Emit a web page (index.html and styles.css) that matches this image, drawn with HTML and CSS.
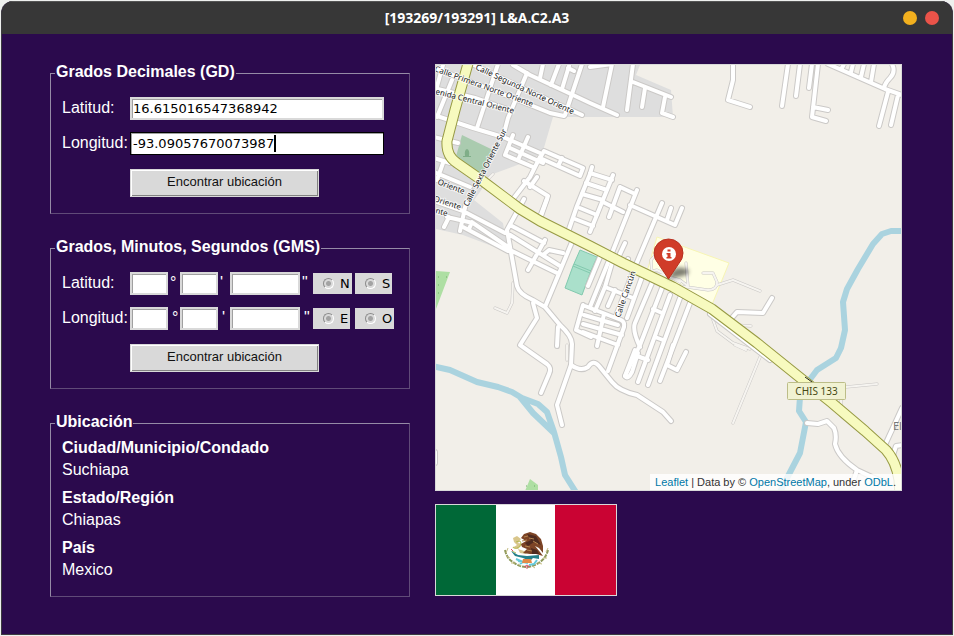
FILE: index.html
```html
<!DOCTYPE html>
<html lang="es">
<head>
<meta charset="utf-8">
<meta name="viewport" content="width=device-width, initial-scale=1">
<title>[193269/193291] L&amp;A.C2.A3</title>
<link rel="stylesheet" href="styles.css">
</head>
<body>
<div class="window">
  <header class="titlebar">
    <h1 class="title">[193269/193291] L&amp;A.C2.A3</h1>
    <div class="window-controls">
      <button class="control minimize" type="button" aria-label="Minimizar"></button>
      <button class="control close" type="button" aria-label="Cerrar"></button>
    </div>
  </header>
  <main class="content">
    <div class="column">
      <form>
        <fieldset class="panel">
          <legend>Grados Decimales (GD)</legend>
          <div class="row">
            <label class="caption" for="gd-lat">Latitud:</label>
            <div class="field"><input id="gd-lat" class="entry" type="text" value="16.615016547368942"></div>
          </div>
          <div class="row">
            <label class="caption" for="gd-lon">Longitud:</label>
            <div class="field"><input id="gd-lon" class="entry active" type="text" value="-93.09057670073987"><span class="caret"></span></div>
          </div>
          <button class="action" type="button">Encontrar ubicación</button>
        </fieldset>
      </form>
      <form>
        <fieldset class="panel">
          <legend>Grados, Minutos, Segundos (GMS)</legend>
          <div class="row">
            <label class="caption" for="lat-g">Latitud:</label>
            <div class="dms">
              <input id="lat-g" class="entry" type="text"><span class="unit">°</span>
              <input class="entry" type="text" aria-label="Minutos de latitud"><span class="unit">'</span>
              <input class="entry" type="text" aria-label="Segundos de latitud"><span class="unit">"</span>
              <label class="choice"><input type="radio" name="lat">N</label>
              <label class="choice"><input type="radio" name="lat">S</label>
            </div>
          </div>
          <div class="row">
            <label class="caption" for="lon-g">Longitud:</label>
            <div class="dms">
              <input id="lon-g" class="entry" type="text"><span class="unit shifted">°</span>
              <input class="entry" type="text" aria-label="Minutos de longitud"><span class="unit shifted">'</span>
              <input class="entry" type="text" aria-label="Segundos de longitud"><span class="unit shifted">"</span>
              <label class="choice"><input type="radio" name="lon">E</label>
              <label class="choice"><input type="radio" name="lon">O</label>
            </div>
          </div>
          <button class="action" type="button">Encontrar ubicación</button>
        </fieldset>
      </form>
      <fieldset class="panel place">
        <legend>Ubicación</legend>
        <dl>
          <div><dt>Ciudad/Municipio/Condado</dt><dd>Suchiapa</dd></div>
          <div><dt>Estado/Región</dt><dd>Chiapas</dd></div>
          <div><dt>País</dt><dd>Mexico</dd></div>
        </dl>
      </fieldset>
    </div>
    <div class="column visuals">
      <div class="map">
        <svg class="map-drawing" viewBox="436 65 465 425" preserveAspectRatio="xMidYMid slice" role="img" aria-label="Mapa de Suchiapa">
          <defs>
            <g id="streets">
              <path d="M513 65L530 75L573 95L590 103L617 115M434 68L477 84L513 98L550 113L564 116M472 64L520 87L582 115M434 88L475 98L510 110M434 115L473 128L503 137L540 153"/>
              <path d="M498 64L477 128M527 73L508 118L503 137M452 80L437 117M443 65L436 90M543 64L540 78M559 64L551 85M569 66L562 89M582 64L565 115M574 71L568 68M590 67L612 64L603 107M633 64L627 110M633 82L671 97M645 88L642 107M665 97L662 113L673 117"/>
              <path d="M434 137L458 143M434 158L450 163M443 163L437 180M434 172L470 187M513 135L505 155L533 167M528 137L518 160M510 148L543 163M544 151L583 168L580 176L540 158ZM562 158L559 164M540 157L530 177L510 203M537 177L530 187M524 181L548 196L540 219M590 174L577 206L567 235"/>
              <path d="M592 167L590 174M590 173L612 180M586 183L607 190M582 194L603 200M613 175L590 232M580 208L597 215M575 219L593 226M620 187L609 217M620 187L633 193M637 190L612 253L590 307M662 203L635 267L616 316M603 202L623 212M630 205L675 225L682 208M671 208L667 220"/>
              <path d="M547 199L540 217M524 199L507 230L512 258L517 286Q519 294 533 300L545 307L560 325Q572 336 572 344L571 365L557 405L562 425M572 242L555 283L545 307M510 225L544 243M545 240L528 270M507 233L560 266M510 250L557 273M543 255L549 250L563 253M434 201L463 211L505 233M447 217L473 223L508 247M463 227L508 251M449 217L444 227M466 203L460 231M472 222L469 229"/>
              <path d="M533 303L537 318L520 345L547 364Q552 368 549 374L541 393M558 327L557 346M571 365Q581 372 588 367Q593 359 599 366L612 382Q619 391 637 395L663 412L671 421"/>
              <path d="M600 257L588 286M612 263L605 287L595 311M625 243L618 258M628 259L626 264M605 287L633 298M615 290L608 306M642 277L627 318M652 283L635 323Q632 330 640 347M662 288L640 345L625 376M653 309L662 313M670 295L638 382M680 298L648 385M690 303L660 381M655 337L663 340"/>
              <path d="M585 306L621 320Q625 322 624 327L608 371M584 315L618 325M583 324L622 335M583 332L618 345M604 314L597 346M583 305L576 330L591 337M635 350L625 376Q628 380 632 372L638 353M637 356L648 360M673 345L667 365L677 370L686 352"/>
              <path d="M788 64L782 106M800 64L796 96M812 64L809 88M818 64L812 117L826 121M813 107L828 110M828 64L885 89L902 95M844 64L842 68M853 64L851 72M864 64L861 77M874 64L871 82M892 64Q896 72 890 78Q885 83 884 88M888 92L879 126M898 95L891 125M733 64L733 80L728 100L750 107"/>
              <path d="M730 320L737 312L763 313L772 298M710 314L770 360M807 423L818 424L827 421L834 428Q837 435 835 444Q838 457 857 470L872 477L885 482M857 470L852 485M902 408L885 445M903 445L896 446L893 455"/>
              <path d="M435 452V463"/>
            </g>
            <g id="tracks">
              <path d="M513 283L512 303L507 313L495 308M717 285L733 280L760 291M703 273L713 273L717 282Q717 290 708 290L673 285M650 272L680 280L688 286L686 263M652 275L651 260L660 250M648 272L657 270L680 282M713 320L717 331L733 343L750 349M736 325L751 326M760 357L733 423M846 387L877 384M844 390L841 400L841 416L865 436M567 345L567 360M493 174L480 187M735 345L746 350"/>
            </g>
            <path id="highway" d="M469 60L455 110L447 141Q446 156 457 163L480 179L520 209L540 221L590 246L623 263L673 287L712 309L757 343L798 376L832 403L865 431L886 450Q896 461 899 480L900 496"/>
            <filter id="soft" x="-40%" y="-40%" width="180%" height="180%"><feGaussianBlur stdDeviation="2"/></filter>
          </defs>
          <rect class="land" x="436" y="65" width="465" height="425"/>
          <path class="urban" d="M436 65H640L636 75L671 90L673 117H553L543 151L533 159L493 174L474 200L503 223L508 252L463 235L436 229Z"/>
          <path class="park" d="M462 135L493 150L482 175L455 160Z"/>
          <path class="tree" d="M467 149Q470 150 469 156H471V157H463V156H465Q464 150 467 149Z"/>
          <path class="meadow" d="M436 271L450 272L436 309ZM525 491L530 479L538 485V491Z"/>
          <path class="dots" d="M438 277h1M446 277h1M438 285h1M438 293h1M526 486h1M534 486h1"/>
          <path class="school" d="M657 237L729 263L711 307L646 275Z"/>
          <path class="pitch" d="M580 250L597 257L590 273L582 295L565 288L573 266Z"/>
          <path class="pitch-line" d="M573 266L590 273M574 264L591 271"/>
          <path class="river" d="M432 366L450 370L477 382L498 387L512 392L522 398L538 404L547 412L554 432L561 457L565 475L577 494M520 397L533 413L555 434M904 231L891 231L882 234L873 244L858 269L847 289L843 302L845 330L841 348L836 358L817 370L808 382L800 397L799 411L806 422L800 453L786 480L779 494"/>
          <use class="track-case" href="#tracks"/><use class="track" href="#tracks"/>
          <use class="street-case" href="#streets"/><use class="street" href="#streets"/>
          <use class="highway-case" href="#highway"/><use class="highway" href="#highway"/>
          <path class="bridge" d="M805 377L812 382"/>
          <g class="street-name">
            <text transform="translate(475 69) rotate(25)">Calle Segunda Norte Oriente</text>
            <text transform="translate(434 71) rotate(20)">Calle Primera Norte Oriente</text>
            <text transform="translate(435 94) rotate(14)">enida Central Oriente</text>
            <text transform="translate(468 207) rotate(-63)">Calle Sexta Oriente Sur</text>
            <text transform="translate(437 184) rotate(21)">Oriente</text>
            <text transform="translate(433 201) rotate(18)">Oriente</text>
            <text transform="translate(435 213) rotate(15)">nte</text>
            <text transform="translate(620 318) rotate(-71)">Calle Cancún</text>
          </g>
          <text class="place-name" x="893" y="430">El</text>
          <rect class="shield" x="787.500" y="382.500" width="58" height="17" rx="1"/>
          <text class="shield-text" x="816.500" y="395">CHIS 133</text>
          <path class="shadow" d="M669 279L672 271Q678 265 687 269Q692 273 683 276Z" filter="url(#soft)"/>
          <path class="pin" d="M668.500 279L658.500 264Q654 259 654 253A14.500 14 0 0 1 683 253Q683 259 678.500 264Z"/>
          <circle class="pin-disc" cx="669" cy="254" r="7"/>
          <path class="pin-info" d="M667.500 249.500h3v2h-3zM666.500 253h4v4h1v1.500h-5v-1.500h1v-2.500h-1z"/>
        </svg>
        <div class="attribution"><a href="#leaflet">Leaflet</a> | Data by © <a href="#osm">OpenStreetMap</a>, under <a href="#odbl">ODbL</a>.</div>
      </div>
      <svg class="flag" viewBox="0 0 180 90" role="img" aria-label="Bandera de México">
        <rect class="flag-white" width="180" height="90"/>
        <rect class="flag-green" width="60" height="90"/><rect class="flag-red" x="119" width="61" height="90"/>
        <path class="wreath" d="M69 45Q71 54 77 57Q83 62 91 62Q99 61 104 57Q110 53 112 45"/>
        <path class="wreath-light" d="M70 48L72 43M74 53L70 51M79 58L75 58M85 61L82 59M96 61L99 63M102 58L106 59M107 53L111 53M110 47L112 43"/>
        <path class="eagle-gold" d="M77 33L81 31L85 34L82 38L87 39L82 44L76 43L81 40L78 37ZM82 44L88 46L94 44L90 49L84 48Z"/>
        <path class="eagle" d="M85 33L88 29L94 27L100 29L105 34L107 41L107 48L103 43L99 41L104 47L107 51L100 49L94 49L87 48L91 44L86 42L85 39L90 36Z"/>
        <path class="eagle-shade" d="M91 29L100 31L105 40L98 37L92 41L89 38L95 35ZM95 43L101 45L103 49H96Z"/>
        <path class="eagle-light" d="M88 32L92 31M93 33L98 34M89 41L94 42M97 36L102 39M86 36L91 35M91 45L96 46"/>
        <path class="serpent" d="M80 37Q87 34 84 41Q80 45 77 42M76 46L80 48"/>
        <path class="cactus" d="M75 46L82 50L91 51L103 50L103 54L97 53L94 56L87 53L79 51Z"/>
        <path class="water" d="M80 54L87 57L84 59M101 55L98 59L93 60M82 56L92 58"/>
        <path class="stone" d="M87 54L95 54L96 58L86 58Z"/>
        <path class="ribbon" d="M88 62L91 60L94 62M91 61V64M75 44L77 46"/>
      </svg>
    </div>
  </main>
</div>
</body>
</html>
```
FILE: styles.css
```css
* { box-sizing: border-box; }

body {
  margin: 0;
  background: #eef0ee;
  color: #fff;
  font: 16px/22px "Liberation Sans", Arial, sans-serif;
}

.window {
  display: flex;
  flex-direction: column;
  min-height: calc(100vh - 2px);
  margin: 1px;
  overflow: hidden;
  border: 1px solid #3c3a40;
  border-top: 0;
  border-radius: 12px 12px 0 0;
  background: #2b0a4d;
}

.titlebar {
  display: grid;
  grid-template-columns: 1fr auto 1fr;
  align-items: center;
  height: 33px;
  padding: 0 13px;
  border-top: 1px solid #555;
  background: #373737;
}

.title {
  grid-column: 2;
  margin: 0;
  font: bold 14px/20px "Noto Sans", sans-serif;
}

.window-controls { display: flex; justify-content: flex-end; gap: 8px; }
.control { width: 14px; height: 14px; padding: 0; border: 0; border-radius: 50%; }
.minimize { background: #f2b01e; }
.close { background: #ea5349; }

.content {
  display: grid;
  grid-template-columns: 360px minmax(0, 1fr);
  gap: 25px;
  align-items: start;
  padding: 30px 50px 36px 48px;
}

.column { display: flex; flex-direction: column; gap: 25px; }
.visuals { gap: 13px; }

.panel {
  min-width: 0;
  margin: 0;
  padding: 15px 15px 16px 11px;
  border: 1px solid;
  border-color: #958ba6 #604b78 #604b78 #958ba6;
}

legend {
  margin-left: -7px;
  padding: 0 1px 2px;
  font-weight: bold;
  line-height: 16px;
}

.row {
  display: grid;
  grid-template-columns: 68px 1fr;
  align-items: start;
  margin-bottom: 12px;
}

.caption { line-height: 21px; }
.field { position: relative; width: 254px; }

.entry {
  display: block;
  width: 100%;
  height: 23px;
  padding: 0 1px 1px;
  border: 2px solid;
  border-color: #d9d9d9;
  border-radius: 0;
  outline: 0;
  background: #fff;
  box-shadow: inset 1px 1px #a0a0a0;
  color: #000;
  font: 13px/17px "DejaVu Sans", sans-serif;
}

.active { border: 1px solid #000; padding: 0 2px 1px; }

.caret {
  position: absolute;
  top: 3px;
  left: 144px;
  width: 2px;
  height: 17px;
  background: #000;
}

.action {
  display: block;
  width: 189px;
  height: 28px;
  margin: 14px 0 0 68px;
  padding: 0 0 2px;
  border: 1px solid #d9d9d9;
  border-radius: 0;
  background: #d9d9d9;
  box-shadow: inset 1px 1px #fff, inset -1px -1px #828282;
  color: #111;
  font: 13px/20px "Liberation Sans", Arial, sans-serif;
}

.dms {
  display: grid;
  grid-template-columns: 38px 12px 38px 12px 70px 13px 42px auto;
  align-items: center;
  justify-content: start;
}

.unit { padding: 0 0 2px 2px; line-height: 21px; }
.shifted { padding-left: 4px; }

.choice {
  display: flex;
  align-items: center;
  justify-self: start;
  gap: 6px;
  height: 21px;
  padding: 0 2px 0 10px;
  background: #d9d9d9;
  color: #000;
  font: 13px/21px "DejaVu Sans", sans-serif;
}

.choice input {
  appearance: none;
  width: 11px;
  height: 11px;
  margin: 0;
  border: 1px solid;
  border-color: #8c8c8c #fff #fff #8c8c8c;
  border-radius: 50%;
  background: radial-gradient(circle, #a3a3a3 0 2px, #d9d9d9 3px);
}

.place { padding-top: 5px; padding-bottom: 15px; }
dl { display: grid; gap: 6px; margin: 0; }
dt { font-weight: bold; }
dd { margin: 0; }

.map {
  position: relative;
  overflow: hidden;
  border: 1px solid #d9d9d9;
  background: #f2efe9;
}

.map-drawing { display: block; width: 100%; height: auto; }
.land { fill: #f2efe9; }
.urban { fill: #dedede; }
.park { fill: #aacbaf; }
.tree { fill: #7fae88; }
.meadow { fill: #aedfa3; }
.dots { stroke: #6faa66; }
.school { fill: #ffffe5; stroke: #f7f5b4; }
.pitch { fill: #aae0cb; stroke: #82c9ae; }
.pitch-line { fill: none; stroke: #82c9ae; }
.river { fill: none; stroke: #aad3df; stroke-width: 6; stroke-linejoin: round; }

.street, .street-case, .track, .track-case, .highway, .highway-case {
  fill: none;
  stroke-linecap: round;
  stroke-linejoin: round;
}

.street-case { stroke: #cbc9c7; stroke-width: 6; }
.street { stroke: #fff; stroke-width: 4; }
.track-case { stroke: #c8c6c4; stroke-width: 3; }
.track { stroke: #f6f4f0; stroke-width: 2; }
.highway-case { stroke: #979a43; stroke-width: 11; }
.highway { stroke: #f7fabf; stroke-width: 9; }
.bridge { stroke: #222; }

.street-name {
  fill: #222;
  stroke: #fff;
  stroke-opacity: 0.700;
  stroke-width: 2;
  paint-order: stroke;
  font: 8px "Noto Sans", sans-serif;
}

.place-name { fill: #777; font: 11px "Noto Sans", sans-serif; }
.shield { fill: #f1f2d2; stroke: #bcbd88; }
.shield-text { fill: #474b14; font: 10px "Noto Sans", sans-serif; text-anchor: middle; }
.shadow { fill: #000; opacity: 0.500; }
.pin { fill: #d03c29; stroke: #b83222; }
.pin-disc { fill: #fff; }
.pin-info { fill: #d03c29; }

.attribution {
  position: absolute;
  right: 0;
  bottom: 0;
  padding: 0 5px;
  background: rgba(255, 255, 255, 0.8);
  color: #333;
  font: 11px/16px "Liberation Sans", Arial, sans-serif;
}

.attribution a { color: #0078a8; text-decoration: none; }

.flag { display: block; width: 182px; border: 1px solid #d9d9d9; }
.flag-white { fill: #fff; }
.flag-green { fill: #006837; }
.flag-red { fill: #ca0333; }
.wreath { fill: none; stroke: #8e9a5c; stroke-width: 2; stroke-dasharray: 4 1; }
.wreath-light { stroke: #c5bd85; }
.eagle { fill: #7d4426; }
.eagle-shade { fill: #4f2b20; }
.eagle-gold { fill: #d9c68b; }
.eagle-light { stroke: #b3854f; }
.serpent { fill: none; stroke: #b7bb55; }
.cactus { fill: #24808b; }
.water { fill: none; stroke: #63c9da; stroke-width: 2; }
.stone { fill: #e28a47; }
.ribbon { fill: none; stroke: #d9536b; }
```
